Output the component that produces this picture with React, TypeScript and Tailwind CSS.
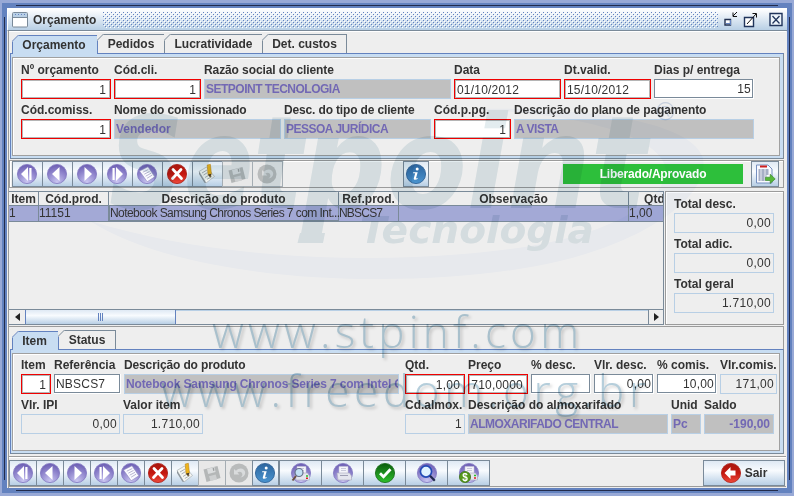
import React from 'react';

type Kind =
  | 'first' | 'prev' | 'next' | 'last' | 'new' | 'delete' | 'edit' | 'save' | 'undo' | 'info'
  | 'preview' | 'print' | 'ok' | 'search' | 'money' | 'exit' | 'report';

function Gradients() {
  return (
    <svg width="0" height="0" className="absolute">
      <defs>
        <radialGradient id="purple" cx="0.5" cy="0.9" r="0.9">
          <stop offset="0" stopColor="#c9c5f0" />
          <stop offset="0.55" stopColor="#9389cf" />
          <stop offset="1" stopColor="#6a5cb2" />
        </radialGradient>
        <linearGradient id="red" x1="0" y1="0" x2="0" y2="1">
          <stop offset="0" stopColor="#a81810" />
          <stop offset="0.5" stopColor="#c4170f" />
          <stop offset="1" stopColor="#ee4a3c" />
        </linearGradient>
        <linearGradient id="blue" x1="0" y1="0" x2="0" y2="1">
          <stop offset="0" stopColor="#2c659f" />
          <stop offset="1" stopColor="#4a94cf" />
        </linearGradient>
        <linearGradient id="green" x1="0" y1="0" x2="0" y2="1">
          <stop offset="0" stopColor="#0b5c0e" />
          <stop offset="1" stopColor="#2fc02c" />
        </linearGradient>
        <pattern id="bumps" width="4" height="4" patternUnits="userSpaceOnUse">
          <path d="M0 0h1v1H0zM2 2h1v1H2z" fill="#6382bf" />
          <path d="M1 1h1v1H1zM3 3h1v1H3z" fill="#fff" />
        </pattern>
      </defs>
    </svg>
  );
}

function Disc({ fill, stroke }: { fill: string; stroke: string }) {
  return <circle cx="10" cy="10" r="9.6" fill={fill} stroke={stroke} strokeWidth="0.8" />;
}

function Icon({ kind }: { kind: Kind }) {
  const purple = <Disc fill="url(#purple)" stroke="#8378c2" />;
  const printer = (
    <>
      <path d="M6 3.5h9v7H6z" fill="#f4f4fa" stroke="#c4c4d6" strokeWidth=".5" />
      <path d="M4 10h12.5l2 3v4H5z" fill="#e4e5ee" stroke="#a9a9bd" strokeWidth=".6" />
      <path d="M8 5.5h5M8 7.5h5" stroke="#b4b6cc" strokeWidth=".7" />
    </>
  );
  const body: Record<Kind, React.ReactNode> = {
    first: <>{purple}<path d="M11 3v14L4 10zM12.3 4h2.2v12h-2.2z" fill="#fff" /></>,
    prev: <>{purple}<path d="M12.5 3v14L5 10z" fill="#fff" /></>,
    next: <>{purple}<path d="M7.5 3v14L15 10z" fill="#fff" /></>,
    last: <>{purple}<path d="M9 3v14L16 10zM5.5 4h2.2v12H5.5z" fill="#fff" /></>,
    new: (
      <>
        {purple}
        <path d="M2.5 7 11 2.8l6.8 10-7.6 5z" fill="#fafaff" stroke="#8b87ba" strokeWidth=".6" />
        <path d="m5.8 8.2 5.5-2.7M7.3 10.2l5.3-2.8M8.7 12.2l5.3-2.9M10.1 14.2l5-3" stroke="#b0aecb" strokeWidth=".9" />
      </>
    ),
    delete: (
      <>
        <Disc fill="url(#red)" stroke="#aa1912" />
        <path d="m6 5.5 8.5 9M14 5.5l-8.5 9" stroke="#fff" strokeWidth="2.8" strokeLinecap="round" />
      </>
    ),
    edit: (
      <>
        <path d="m2 7.5 7.5-4.5 8 9.5-8.5 6.5z" fill="#f5f6f2" stroke="#a9b0b4" strokeWidth=".7" />
        <path d="m2 7.5 7 11.5-1.5-.3L2 10z" fill="#8c949a" />
        <path d="m5 9 5-3M6.5 11l4-2.4M8 13.5l5-3M9.8 15.5l5-3" stroke="#969da2" strokeWidth=".8" />
        <path d="m10.2 1 3.2-.7 1 9.2-1 3.5-2.4-2.6z" fill="#edb51e" stroke="#b37812" strokeWidth=".5" />
        <path d="m11 10.5 3.3-.7-1 3.8z" fill="#4b4030" />
      </>
    ),
    save: (
      <g opacity=".8">
        <path d="M1.5 6.5 15.5 3 18.5 15 4.5 19z" fill="#a8abac" />
        <path d="m5 6 7.4-2 1.2 5-7.4 1.9z" fill="#d8dbdc" />
        <path d="m7 13.2 6.7-1.8 1.4 5-6.6 1.7z" fill="#c8cbcc" />
        <path d="m10.6 5.2 1.3-.4.6 2.8-1.3.4z" fill="#8a8d8f" />
      </g>
    ),
    undo: (
      <g opacity=".75">
        <circle cx="10" cy="10" r="9.5" fill="#aaacad" />
        <path d="M5 6v5.5h5.4L8.4 9.5c2.2-1.7 5-.7 5 2 0 1.4-.8 2.4-2.2 3 3.1-.2 5-2.1 5-4.8 0-4.5-5.8-6-9.2-2z" fill="#d4d7d8" />
      </g>
    ),
    info: (
      <>
        <Disc fill="url(#blue)" stroke="#275b91" />
        <circle cx="11.2" cy="4.9" r="1.5" fill="#fff" />
        <path d="M7.3 8.2h4.4l-1.8 6.4 1.8-.5-.2.9c-1.2.9-4.2 1.4-3.7-.7l1.4-5.1H7z" fill="#fff" />
      </>
    ),
    preview: (
      <>
        {purple}{printer}
        <circle cx="8" cy="9.5" r="4" fill="#c2e0f4" stroke="#66718b" strokeWidth="1.2" />
        <path d="m5 13-3.5 4.5" stroke="#6c5140" strokeWidth="2" />
        <path d="M15 13h2" stroke="#2bbf25" strokeWidth="1.4" /><path d="M15 15.3h2" stroke="#de2020" strokeWidth="1.4" />
      </>
    ),
    print: <>{purple}{printer}<path d="M7 12.5h8" stroke="#9f9fb4" /></>,
    ok: (
      <>
        <Disc fill="url(#green)" stroke="#136914" />
        <path d="m5 10.3 3.5 3.5 7-7.5" stroke="#fff" strokeWidth="2.8" fill="none" />
      </>
    ),
    search: (
      <>
        {purple}
        <circle cx="9" cy="8.5" r="5.6" fill="#e0f3ff" stroke="#244bb6" strokeWidth="1.7" />
        <path d="m13 12.8 4.8 5" stroke="#20294d" strokeWidth="2.2" />
      </>
    ),
    money: (
      <>
        {purple}{printer}
        <path d="M15 12.5h2" stroke="#2bbf25" strokeWidth="1.4" /><path d="M15 15h2" stroke="#de2020" strokeWidth="1.4" />
        <circle cx="6" cy="14" r="5.6" fill="#55981c" stroke="#356911" strokeWidth=".7" />
        <text x="6" y="17.7" fontSize="10" fontWeight="700" textAnchor="middle" fill="#fff">$</text>
      </>
    ),
    exit: (
      <>
        <Disc fill="url(#red)" stroke="#af1d15" />
        <path d="M9.5 4v3.5h5v5h-5V16L3.5 10z" fill="#fff" />
      </>
    ),
    report: (
      <>
        <path d="M1.5 1h11.5l4 4v14H1.5z" fill="#f9faff" stroke="#758fbf" />
        <path d="M5 2.5h7" stroke="#cf1e1e" strokeWidth="2" />
        <path d="M3.5 6h10M3.5 8h10M3.5 10h10M3.5 12h8M3.5 14h7M3.5 16h7" stroke="#54658c" strokeWidth="1" />
        <path d="M6 5v12M10 5v12" stroke="#f9faff" strokeWidth=".8" />
        <path d="M10.5 13.2h4.7v-3l5 4.7-5 4.6v-3h-4.7z" fill="#57b83a" stroke="#2f7f22" strokeWidth=".6" />
      </>
    ),
  };
  return <svg viewBox="0 0 20 20" className="h-5 w-5 shrink-0 overflow-visible">{body[kind]}</svg>;
}

const steel = 'border-[#7a8a99]';
const glossy = 'bg-gradient-to-b from-[#dfe9f4] via-[#f8fbfe] via-40% to-[#b8cfe5]';

function ToolButton({ kind, className, disabled }: { kind: Kind; className: string; disabled?: boolean }) {
  return (
    <button
      className={`flex h-[26px] shrink-0 items-center justify-center border ${
        disabled ? 'border-[#a5adb3] bg-[#e8e8e8]' : `${steel} ${glossy}`
      } ${className}`}
    >
      <Icon kind={kind} />
    </button>
  );
}

const editing: Kind[] = ['first', 'prev', 'next', 'last', 'new', 'delete', 'edit', 'save', 'undo'];

type FieldKind = 'key' | 'input' | 'linked' | 'readonly';

function Field({
  label, value, w, kind, left, className = '',
}: { label: string; value: string; w: string; kind: FieldKind; left?: boolean; className?: string }) {
  const align = left ? 'justify-start' : 'justify-end';
  return (
    <div className={`${w} shrink-0 ${className}`}>
      <div className="h-4 whitespace-nowrap text-[12px] font-bold leading-[15px] text-[#333]">{label}</div>
      {kind === 'key' && (
        <div className="h-5 border border-[#f00000] bg-white">
          <div className={`flex h-[18px] items-center border border-[#b5b5b5] pt-px pr-[3px] pl-px text-[12px] tracking-[0.2px] ${align}`}>{value}</div>
        </div>
      )}
      {kind === 'input' && (
        <div className="h-5 border-r border-b border-white">
          <div className={`flex h-[19px] items-center border bg-white px-px text-[12px] tracking-[0.2px] ${steel} ${align}`}>{value}</div>
        </div>
      )}
      {kind === 'linked' && (
        <div className={`flex h-5 items-center overflow-hidden border border-[#b8cfe5] bg-[#c0c0c0] px-px pb-px text-[12px] font-bold whitespace-nowrap text-[#7268b4] ${align}`}>{value}</div>
      )}
      {kind === 'readonly' && (
        <div className={`flex h-5 items-center border border-[#b8cfe5] bg-[#eee] px-[2px] pb-px text-[12px] tracking-[0.3px] ${align}`}>{value}</div>
      )}
    </div>
  );
}

function Tab({ label, w, active }: { label: string; w: string; active?: boolean }) {
  const edge = active ? '#6382bf' : '#7a8a99';
  return (
    <div className={`relative flex h-[19px] shrink-0 items-center justify-center border-t border-r text-[12px] font-bold whitespace-nowrap ${w} ${active ? 'mb-[-1px] h-5 border-l border-[#6382bf] bg-[#c8ddf2] pr-0.5 pb-px' : 'border-[#7a8a99] bg-[#eee]'}`}>
      <svg className="absolute -top-px -left-px" width="7" height="7">
        <path d="M0 0h7L0 7z" fill="#eee" /><path d="M0 6.5 6.5 0" stroke={edge} />
      </svg>
      {label}
    </div>
  );
}

function TabBody({ h, children }: { h: string; children: React.ReactNode }) {
  return (
    <div className={`mr-[2px] ml-px border border-t-[#6382bf] border-r-[#7a8a99] border-b-[#7a8a99] border-l-[#6382bf] bg-[#c8ddf2] pt-[3px] pr-[3px] pb-[2px] pl-px ${h}`}>
      <div className="h-full border border-[#a0a0a0] bg-[#eee] pl-2 shadow-[inset_1px_1px_0_#fff]">{children}</div>
    </div>
  );
}

function HeadCell({ w, label, last }: { w: string; label: string; last?: boolean }) {
  return (
    <div className={`flex h-[14px] shrink-0 items-center overflow-hidden border-b border-[#7a8a99] pt-px text-[12px] font-bold ${last ? 'justify-start pl-[15px] tracking-[0.1px]' : 'justify-center border-r'} ${w}`}>
      {label}
    </div>
  );
}

function Watermark() {
  return (
    <svg className="pointer-events-none absolute top-0 left-0 mix-blend-multiply" width="794" height="496">
      <path
        d="M90 221C190 286 430 292 560 261C650 239 710 195 703 158C692 122 590 106 468 109C590 114 662 138 666 170C665 205 600 238 510 249C370 267 210 258 90 221Z"
        fill="#f8fafe"
      />
      <g fill="#e3ecef" fontFamily="DejaVu Sans" fontWeight="700" fontStyle="italic">
        <text x="109" y="208" fontSize="129" textLength="194" lengthAdjust="spacingAndGlyphs">Set</text>
        <text x="302" y="208" fontSize="129" textLength="345" lengthAdjust="spacingAndGlyphs">point</text>
        <text x="360" y="243" fontSize="38" textLength="234" lengthAdjust="spacingAndGlyphs">Tecnologia</text>
      </g>
      {/* Lower end of the long stem of the "p" */}
      <path d="M300 233H325L323 243H297.500Z" fill="#e3ecef" />
      <text x="665.5" y="120" fontSize="25" textAnchor="middle" fill="#d5deed">®</text>
      <g fontFamily="Open Sans" fontWeight="300" fontSize="44" fill="#b5cedb" className="drop-shadow-[2px_2px_1.5px_rgba(0,0,0,0.18)]">
        <text x="212" y="348" textLength="367">www.stpinf.com</text>
        <text x="161" y="407" textLength="485">www.freedom.org.br</text>
      </g>
    </svg>
  );
}

export default function App() {
  return (
    <div className="relative h-[496px] w-[794px] overflow-hidden bg-[#98a9d6] pt-[3px] pl-[2px] font-['Liberation_Sans',Arial,sans-serif] text-[12px] leading-[14px] text-[#333]">
      <Gradients />
      <div className="h-[490px] w-[790px] bg-[#6382bf] p-[5px]">
        <div className="flex h-[480px] w-[780px] flex-col bg-[#eee]">
          {/* Title bar */}
          <div className="flex h-[23px] items-center border-t border-l border-b border-t-white border-l-white border-b-[#7a8a99] bg-gradient-to-b from-white to-[#b8cfe5] pl-1">
            <svg width="16" height="16" className="shrink-0">
              <rect x=".5" y=".5" width="15" height="14.5" rx="1" fill="#fff" stroke="#7a8a99" />
              <path d="M1 1h14v4H1z" fill="#b8cfe5" /><path d="M3 2.5h10" stroke="#6382bf" strokeDasharray="1 2" /><path d="M1 5.5h14" stroke="#7a8a99" />
            </svg>
            <span className="ml-[5px] w-[66px] font-bold">Orçamento</span>
            <svg className="ml-1 shrink-0" width="615" height="16">
              <rect width="615" height="16" fill="url(#bumps)" />
            </svg>
            <svg width="62" height="18" className="ml-1.5 shrink-0" fill="none">
              <path d="M1 8.5h5.5v5.5H1z" fill="#fff" stroke="#223150" strokeWidth="1.4" /><path d="M2 12.5h5M6.5 9v5" stroke="#6382bf" />
              <path d="m13 1-4 4M9 1.5V5.5h4" stroke="#111" />
              <path d="M20.5 6.5h9v9h-9z" fill="#fff" stroke="#20345b" strokeWidth="1.4" />
              <path d="M23 13l9-10M28.5 2.5h4v4" stroke="#111" />
              <path d="M46 2.5h12v12H46z" fill="#eef5fb" stroke="#20345b" strokeWidth="1.4" />
              <path d="m48.5 5 7 7.5M55.5 5l-7 7.5" stroke="#20345b" strokeWidth="1.3" />
            </svg>
          </div>

          <div className="ml-px flex h-[457px] w-[778px] flex-col border-l border-[#9b9b9b]">
            {/* Quotation header */}
            <div className="flex h-[22px] items-end border-t border-white pl-[3px]">
              <Tab label="Orçamento" w="w-[86px]" active />
              <Tab label="Pedidos" w="w-[67px]" />
              <Tab label="Lucratividade" w="w-[98px]" />
              <Tab label="Det. custos" w="w-[84px]" />
            </div>
            <TabBody h="h-[106px]">
              <div className="flex gap-[3px] pt-[5px]">
                <Field label="Nº orçamento" value="1" w="w-[90px]" kind="key" />
                <Field label="Cód.cli." value="1" w="w-[87px]" kind="key" />
                <Field label="Razão social do cliente" value="SETPOINT TECNOLOGIA" w="w-[247px]" kind="linked" left className="[&>div:last-child]:tracking-[-0.5px] [&>div:first-child]:tracking-[-0.1px]" />
                <Field label="Data" value="01/10/2012" w="w-[107px]" kind="key" left />
                <Field label="Dt.valid." value="15/10/2012" w="w-[87px]" kind="key" left />
                <Field label="Dias p/ entrega" value="15" w="w-[100px]" kind="input" />
              </div>
              <div className="flex gap-[3px] pt-1">
                <Field label="Cód.comiss." value="1" w="w-[90px]" kind="key" />
                <Field label="Nome do comissionado" value="Vendedor" w="w-[167px]" kind="linked" left className="[&>div:first-child]:tracking-[-0.15px]" />
                <Field label="Desc. do tipo de cliente" value="PESSOA JURÍDICA" w="w-[147px]" kind="linked" left className="[&>div:last-child]:tracking-[-0.5px] [&>div:first-child]:tracking-[-0.15px]" />
                <Field label="Cód.p.pg." value="1" w="w-[77px]" kind="key" />
                <Field label="Descrição do plano de pagamento" value="A VISTA" w="w-[240px]" kind="linked" left className="[&>div:first-child]:tracking-[-0.1px] [&>div:last-child]:tracking-[-0.5px]" />
              </div>
            </TabBody>

            {/* Navigation of the items */}
            <div className="mt-px mr-[2px] flex h-[28px] items-start border border-[#9b9b9b] pl-[2px] shadow-[inset_1px_1px_0_#fff]">
              {editing.map((k) => (
                <ToolButton key={k} kind={k} disabled={k === 'save' || k === 'undo'} className={k === 'first' ? 'w-[31px] pr-px' : '-ml-px w-[31px] pr-px'} />
              ))}
              <ToolButton kind="info" className="ml-[120px] w-[26px]" />
              <div className="mt-[3px] ml-[134px] flex h-5 w-[180px] items-center justify-center bg-[#2dbf3b] font-bold tracking-[-0.2px] text-white">Liberado/Aprovado</div>
              <ToolButton kind="report" className="ml-2 w-[28px]" />
            </div>

            {/* Items table and totals */}
            <div className="mt-[3px] flex h-[134px]">
              <div className="flex w-[655px] flex-col overflow-hidden border-t border-r border-[#7a8a99]">
                <div className="flex">
                  <HeadCell w="w-[30px]" label="Item" />
                  <HeadCell w="w-[70px]" label="Cód.prod." />
                  <HeadCell w="w-[230px]" label="Descrição do produto" />
                  <HeadCell w="w-[60px]" label="Ref.prod." />
                  <HeadCell w="w-[230px]" label="Observação" />
                  <HeadCell w="w-[34px]" label="Qtd" last />
                </div>
                <div className="flex h-4 shrink-0 items-stretch border-b border-[#7a8a99] bg-[#a3a9d6] leading-[14px] whitespace-nowrap [&>div]:shrink-0 [&>div]:border-r [&>div]:border-[#7a8a99]">
                  <div className="w-[30px]">1</div>
                  <div className="w-[70px]">11151</div>
                  <div className="-mt-px w-[230px] border border-[#6382bf] text-[12px] tracking-[-0.56px]">Notebook Samsung Chronos Series 7 com Int...</div>
                  <div className="w-[60px] tracking-[-0.8px]">NBSCS7</div>
                  <div className="w-[230px]" />
                  <div className="w-[40px]">1,00</div>
                </div>
                <div className="flex-1" />
                <div className="flex h-4 shrink-0 border-t border-b border-[#7a8a99]">
                  <div className="flex w-4 items-center justify-center"><svg width="5" height="8"><path d="M5 0v8L0 4z" fill="#222" /></svg></div>
                  <div className={`flex w-[151px] items-center justify-center gap-px border-x border-[#6382bf] ${glossy}`}>
                    <div className="h-2 w-px bg-[#6382bf]" /><div className="h-2 w-px bg-[#6382bf]" /><div className="h-2 w-px bg-[#6382bf]" />
                  </div>
                  <div className="flex-1 border-t border-[#b8cfe5]" />
                  <div className="flex w-[15px] items-center justify-center border-l border-[#7a8a99]"><svg width="5" height="8"><path d="M0 0v8L5 4z" fill="#222" /></svg></div>
                </div>
              </div>
              <div className="ml-px flex w-[119px] flex-col gap-1 border border-[#9b9b9b] pt-[5px] pl-2 shadow-[inset_1px_1px_0_#fff]">
                <Field label="Total desc." value="0,00" w="w-[100px]" kind="readonly" />
                <Field label="Total adic." value="0,00" w="w-[100px]" kind="readonly" />
                <Field label="Total geral" value="1.710,00" w="w-[100px]" kind="readonly" />
              </div>
            </div>

            {/* Selected item */}
            <div className="mt-px mr-[2px] flex h-[23px] items-end border-t border-r border-[#9b9b9b] pl-[3px]">
              <Tab label="Item" w="w-[47px]" active />
              <Tab label="Status" w="w-[57px]" />
            </div>
            <TabBody h="h-[105px]">
              <div className="flex pt-1">
                <Field label="Item" value="1" w="w-[30px]" kind="key" />
                <Field label="Referência" value="NBSCS7" w="w-[67px]" kind="input" left className="ml-[3px]" />
                <Field label="Descrição do produto" value="Notebook Samsung Chronos Series 7 com Intel Core" w="w-[275px]" kind="linked" left className="ml-[3px] [&>div]:tracking-[-0.13px]" />
                <Field label="Qtd." value="1,00" w="w-[60px]" kind="key" className="ml-[6px]" />
                <Field label="Preço" value="710,0000" w="w-[60px]" kind="key" className="ml-[3px]" />
                <Field label="% desc." value="" w="w-[60px]" kind="input" className="ml-[3px]" />
                <Field label="Vlr. desc." value="0,00" w="w-[60px]" kind="input" className="ml-[3px]" />
                <Field label="% comis." value="10,00" w="w-[60px]" kind="input" className="ml-[3px]" />
                <Field label="Vlr.comis." value="171,00" w="w-[57px]" kind="readonly" className="ml-[3px]" />
              </div>
              <div className="flex gap-[3px] pt-1">
                <Field label="Vlr. IPI" value="0,00" w="w-[99px]" kind="readonly" />
                <Field label="Valor item" value="1.710,00" w="w-[80px]" kind="readonly" />
                <Field label="Cd.almox." value="1" w="w-[60px]" kind="readonly" className="ml-[199px]" />
                <Field label="Descrição do almoxarifado" value="ALMOXARIFADO CENTRAL" w="w-[200px]" kind="linked" left className="[&>div:last-child]:tracking-[-0.5px]" />
                <Field label="Unid" value="Pc" w="w-[30px]" kind="linked" left />
                <Field label="Saldo" value="-190,00" w="w-[70px]" kind="linked" className="[&>div:last-child]:pr-[3px]" />
              </div>
            </TabBody>

            {/* Bottom tool bar */}
            <div className="mt-[2px] flex h-[31px] border-t border-b border-[#9b9b9b] pt-[3px] shadow-[inset_0_1px_0_#fff]">
              {editing.map((k) => (
                <ToolButton key={k} kind={k} disabled={k === 'save' || k === 'undo'} className={k === 'first' ? 'w-[28px]' : '-ml-px w-[28px]'} />
              ))}
              <ToolButton kind="info" className="-ml-px w-[27px] pr-px" />
              {(['preview', 'print', 'ok', 'search', 'money'] as Kind[]).map((k, i) => (
                <ToolButton key={k} kind={k} className={i === 0 ? 'w-[43px]' : '-ml-px w-[43px]'} />
              ))}
              <button className={`mr-px ml-auto flex h-[26px] w-[82px] items-center justify-center gap-1 border font-bold ${steel} ${glossy}`}>
                <Icon kind="exit" />Sair
              </button>
            </div>
          </div>
        </div>
      </div>
      {/* Grip lines engraved in the window frame */}
      <div className="absolute top-[5px] left-4 h-px w-[762px] bg-[#222c4c]" />
      <div className="absolute top-[490px] left-4 h-px w-[762px] bg-[#222c4c]" />
      <div className="absolute top-[17px] left-1 h-[463px] w-px bg-[#222c4c]" />
      <div className="absolute top-[17px] left-[789px] h-[463px] w-px bg-[#222c4c]" />
      <Watermark />
    </div>
  );
}
